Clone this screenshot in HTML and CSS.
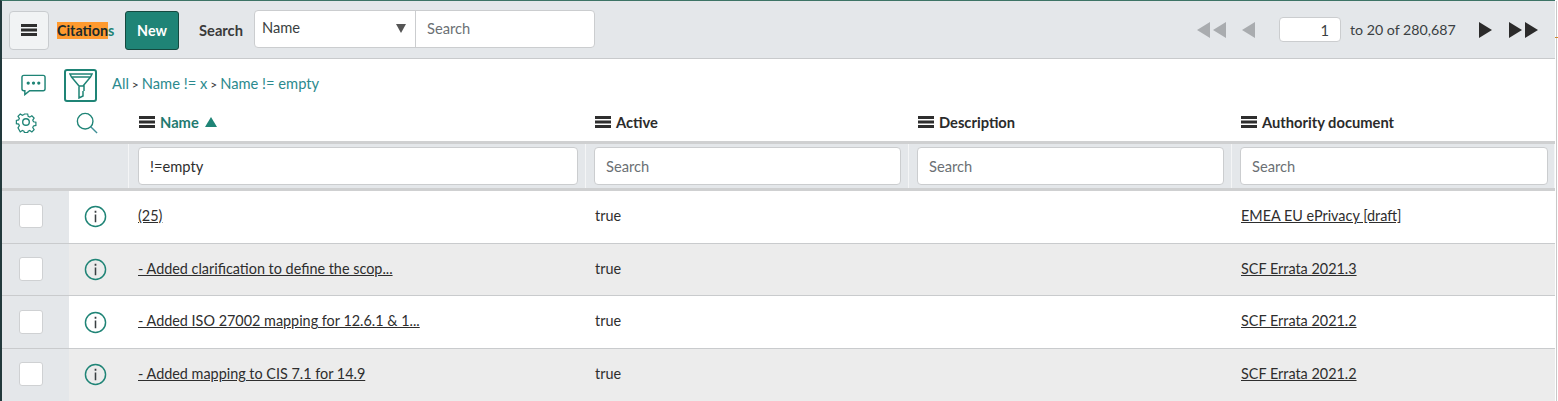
FILE: index.html
```html
<!DOCTYPE html>
<html lang="en">
<head>
  <meta charset="UTF-8">
  <title>Citations</title>
  <link rel="stylesheet" href="styles.css">
</head>
<body>
  <svg class="defs" width="0" height="0">
    <symbol id="lines" viewBox="0 0 16 12"><path d="M0 0h16v3H0zM0 4.5h16v3H0zM0 9h16v3H0z"/></symbol>
    <symbol id="info" viewBox="0 0 24 24"><circle cx="12" cy="12" r="10.5" fill="none" stroke="currentColor" stroke-width="1.5"/><path d="M11.2 10h1.600v8h-1.600zM11.100 6h1.800v2h-1.800z" fill="#3a3f42"/></symbol>
  </svg>
  <div class="page">
    <header class="topbar">
      <button class="menu-btn"><svg class="lines-lg"><use href="#lines"/></svg></button>
      <h1 class="title"><mark>Citation</mark>s</h1>
      <button class="new-btn">New</button>
      <span class="search-label">Search</span>
      <div class="search-group">
        <div class="search-select">Name<i class="select-arrow"></i></div>
        <div class="search-input">Search</div>
      </div>
      <div class="pager">
        <span class="tri tri-left"></span><span class="tri tri-left tight"></span>
        <span class="tri tri-left single"></span>
        <div class="page-input">1</div>
        <span class="page-text">to 20 of 280,687</span>
        <span class="tri tri-right"></span>
        <span class="tri tri-right double"></span><span class="tri tri-right tight"></span>
      </div>
    </header>

    <div class="filter-bar">
      <svg class="chat-icon" viewBox="0 0 26 22" width="25" height="22" fill="none" stroke="#1f8476" stroke-width="1.5">
        <path d="M3 1h20a2 2 0 0 1 2 2v12a2 2 0 0 1-2 2H9l-5 4v-4H3a2 2 0 0 1-2-2V3a2 2 0 0 1 2-2z"/>
        <circle cx="7.500" cy="9" r="1.700" fill="#1f8476" stroke="none"/><circle cx="13" cy="9" r="1.700" fill="#1f8476" stroke="none"/><circle cx="18.500" cy="9" r="1.700" fill="#1f8476" stroke="none"/>
      </svg>
      <div class="funnel-btn">
        <svg viewBox="0 0 24 26" width="24" height="26" fill="none" stroke="#1f8476" stroke-width="1.5">
          <path d="M1 1h22l-1.500 3H2.500zM2.500 4l7.500 9h4l7.500-9M10 13h5v5M10 13v12l4-2v-5"/>
        </svg>
      </div>
      <div class="crumbs">
        <a>All</a><b>&gt;</b><a>Name != x</a><b>&gt;</b><a>Name != empty</a>
      </div>
    </div>

    <div class="list">
      <div class="row head-row">
        <div class="cell check-col">
          <svg viewBox="0 0 24 24" width="22" height="22" fill="none" stroke="#1f8476" stroke-width="1.500">
            <path d="M10 2h4l.6 3 2 .9 2.600-1.700 2.800 2.800-1.700 2.600.9 2 3 .6v4l-3 .6-.9 2 1.700 2.600-2.800 2.800-2.600-1.700-2 .9-.6 1.600h-4l-.6-1.600-2-.9-2.600 1.700L2 19.200l1.700-2.600-.9-2-2.800-.6v-4l2.800-.6.9-2L2 4.800 4.800 2l2.600 1.700 2-.9z" transform="translate(1.500 1.500) scale(.88)"/>
            <circle cx="12" cy="12" r="3.600"/>
          </svg>
        </div>
        <div class="cell info-col">
          <svg viewBox="0 0 24 24" width="22" height="22" fill="none" stroke="#1f8476" stroke-width="1.500">
            <circle cx="10" cy="10" r="8.500"/><path d="M16 16l7 7" stroke="#3f8f96"/>
          </svg>
        </div>
        <div class="cell col-name th th-active"><svg class="lines"><use href="#lines"/></svg>Name<i class="sort-up"></i></div>
        <div class="cell col-active th"><svg class="lines"><use href="#lines"/></svg>Active</div>
        <div class="cell col-desc th"><svg class="lines"><use href="#lines"/></svg>Description</div>
        <div class="cell col-auth th"><svg class="lines"><use href="#lines"/></svg>Authority document</div>
      </div>

      <div class="row search-row">
        <div class="cell lead-col"></div>
        <div class="cell col-name"><div class="col-search filled">!=empty</div></div>
        <div class="cell col-active"><div class="col-search">Search</div></div>
        <div class="cell col-desc"><div class="col-search">Search</div></div>
        <div class="cell col-auth"><div class="col-search">Search</div></div>
      </div>

      <div class="row data-row">
        <div class="cell check-col"><span class="checkbox"></span></div>
        <div class="cell info-col"><svg class="info"><use href="#info"/></svg></div>
        <div class="cell col-name"><a>(25)</a></div>
        <div class="cell col-active">true</div>
        <div class="cell col-desc"></div>
        <div class="cell col-auth"><a>EMEA EU ePrivacy [draft]</a></div>
      </div>
      <div class="row data-row odd">
        <div class="cell check-col"><span class="checkbox"></span></div>
        <div class="cell info-col"><svg class="info"><use href="#info"/></svg></div>
        <div class="cell col-name"><a>- Added clarification to define the scop...</a></div>
        <div class="cell col-active">true</div>
        <div class="cell col-desc"></div>
        <div class="cell col-auth"><a>SCF Errata 2021.3</a></div>
      </div>
      <div class="row data-row">
        <div class="cell check-col"><span class="checkbox"></span></div>
        <div class="cell info-col"><svg class="info"><use href="#info"/></svg></div>
        <div class="cell col-name"><a>- Added ISO 27002 mapping for 12.6.1 &amp; 1...</a></div>
        <div class="cell col-active">true</div>
        <div class="cell col-desc"></div>
        <div class="cell col-auth"><a>SCF Errata 2021.2</a></div>
      </div>
      <div class="row data-row odd">
        <div class="cell check-col"><span class="checkbox"></span></div>
        <div class="cell info-col"><svg class="info"><use href="#info"/></svg></div>
        <div class="cell col-name"><a>- Added mapping to CIS 7.1 for 14.9</a></div>
        <div class="cell col-active">true</div>
        <div class="cell col-desc"></div>
        <div class="cell col-auth"><a>SCF Errata 2021.2</a></div>
      </div>
    </div>
  </div>
  <div class="edge-line"><i class="edge-tick"></i></div>
</body>
</html>
```

FILE: styles.css
```css
* {
  box-sizing: border-box;
}
html, body {
  height: 100%;
}
body {
  margin: 0;
  background: #fff;
  color: #2e2e2e;
  font-family: "Lato", "Liberation Sans", sans-serif;
  font-size: 14.7px;
  overflow: hidden;
  position: relative;
}
.defs {
  display: block;
  height: 0;
}
.page {
  width: 1555px;
  height: 401px;
  border-top: 1px solid #3d7466;
  border-left: 2px solid #22393c;
}
.edge-line {
  position: absolute;
  left: 1556px;
  top: 1px;
  bottom: 0;
  width: 1px;
  background: #c8c8c8;
}
.edge-tick {
  position: absolute;
  left: -1px;
  top: 36px;
  width: 3px;
  height: 1px;
  background: #d08a2e;
}

/* top bar */
.topbar {
  height: 58px;
  background: #e4e7ea;
  border-bottom: 1px solid #c8cacc;
  display: flex;
  align-items: center;
  padding-left: 7px;
}
.menu-btn {
  width: 40px;
  height: 39px;
  margin-top: 1px;
  background: #f1f3f4;
  border: 1px solid #c9cccf;
  border-radius: 4px;
  padding: 0;
  display: flex;
  align-items: center;
  justify-content: center;
}
.lines-lg {
  width: 16px;
  height: 12px;
  fill: #2e2e2e;
}
.title {
  margin: 1px 0 0 8px;
  font-size: 14.3px;
  font-weight: 700;
  color: #1f8476;
  width: 68px;
}
.title mark {
  background: #ff9a2e;
  color: #1b2a2a;
}
.new-btn {
  width: 54px;
  height: 39px;
  margin-top: 1px;
  background: #1f8476;
  color: #fff;
  border: 1px solid #15493f;
  border-radius: 3px;
  font: 700 14.3px "Lato", sans-serif;
  padding: 0;
}
.search-label {
  margin-left: 20px;
  font-weight: 700;
  color: #3a3a3a;
  margin-top: 1px;
  width: 45px;
}
.search-group {
  margin-left: 10px;
  width: 341px;
  height: 38px;
  background: #fff;
  border: 1px solid #cbcdcf;
  border-radius: 4px;
  display: flex;
  margin-bottom: 1px;
}
.search-select {
  width: 161px;
  border-right: 1px solid #cbcdcf;
  padding: 7px 7px;
  color: #3a3f42;
  position: relative;
}
.select-arrow {
  position: absolute;
  right: 9px;
  top: 13px;
  border-left: 5px solid transparent;
  border-right: 5px solid transparent;
  border-top: 9px solid #555;
}
.search-input {
  padding: 8px 11px;
  color: #6b7074;
}
.pager {
  margin-left: auto;
  display: flex;
  align-items: center;
  padding-right: 17px;
}
.tri {
  width: 0;
  height: 0;
  border-top: 8px solid transparent;
  border-bottom: 8px solid transparent;
}
.tri-left {
  border-right: 13px solid #a9acaf;
}
.tri-right {
  border-left: 13px solid #2b2b2b;
}
.tight {
  margin-left: 3px;
}
.single {
  margin-left: 16px;
}
.page-input {
  width: 62px;
  height: 25px;
  margin-left: 24px;
  background: #fff;
  border: 1px solid #cbcdcf;
  border-radius: 4px;
  text-align: right;
  padding: 3px 11px;
  color: #3a3f42;
}
.page-text {
  margin-left: 9px;
  width: 129px;
  color: #3a3f42;
  font-size: 14.2px;
}
.double {
  margin-left: 17px;
}

/* breadcrumb row */
.filter-bar {
  height: 47px;
  display: flex;
  align-items: center;
  padding-left: 19px;
}
.chat-icon {
  margin-top: 5px;
  margin-right: 1px;
}
.funnel-btn {
  width: 33px;
  height: 33px;
  margin-left: 17px;
  margin-top: 6px;
  border: 2px solid #1f8476;
  border-radius: 3px;
  display: flex;
  align-items: center;
  justify-content: center;
}
.crumbs {
  margin-left: 15px;
  margin-top: 1px;
  color: #2b8a8e;
}
.crumbs b {
  font-weight: 400;
  color: #333;
  margin: 0 3px;
  font-size: 12px;
}

/* list */
.row {
  display: flex;
}
.cell {
  display: flex;
  align-items: center;
}
.check-col {
  width: 67px;
  justify-content: center;
}
.info-col {
  width: 60px;
  padding-left: 15px;
}
.col-name {
  width: 457px;
  padding-left: 9px;
}
.col-active, .col-desc, .col-auth {
  width: 323px;
  padding-left: 8px;
}
.head-row {
  height: 38px;
  border-bottom: 3px solid #cfd0d1;
}
.head-row .check-col {
  padding: 0 20px 3px 0;
}
.head-row .info-col {
  padding: 0 0 1px 7px;
}
.th {
  font-weight: 700;
  color: #2b2b2b;
  padding-bottom: 4px;
  padding-left: 9px;
}
.th-active {
  color: #1f7a70;
  padding-left: 10px;
}
.lines {
  width: 16px;
  height: 12px;
  margin-right: 5px;
  fill: #2e2e2e;
  flex: none;
}
.sort-up {
  margin-left: 6px;
  border-left: 6px solid transparent;
  border-right: 6px solid transparent;
  border-bottom: 10px solid #1f8476;
}
.search-row {
  height: 47px;
  background: #e4e7ea;
  border-bottom: 3px solid #cfd0d1;
}
.search-row .cell {
  padding-right: 7px;
  border-right: 1px solid #f4f5f6;
}
.search-row .lead-col {
  width: 127px;
  padding-right: 0;
}
.search-row .col-auth {
  padding-right: 6px;
}
.col-search {
  width: 100%;
  height: 38px;
  background: #fff;
  border: 1px solid #cbcdcf;
  border-radius: 4px;
  padding: 9px 11px;
  color: #6b7074;
}
.col-search.filled {
  color: #2e2e2e;
}
.data-row {
  height: 52.7px;
  border-bottom: 1px solid #c9cbcd;
  color: #2e2e2e;
  font-size: 14.4px;
}
.data-row.odd {
  background: #ececec;
}
.data-row .check-col {
  background: #e4e7ea;
  padding: 0 9px 1px 0;
}
.data-row .col-name, .data-row .col-active, .data-row .col-auth {
  padding-bottom: 3px;
}
.data-row .col-active, .data-row .col-auth {
  padding-left: 9px;
}
.data-row a {
  text-decoration: underline;
  color: #2e2e2e;
}
.checkbox {
  width: 24px;
  height: 24px;
  background: #fff;
  border: 1px solid #cfd1d3;
  border-radius: 3px;
}
.info {
  width: 23px;
  height: 23px;
  color: #1f8476;
}
```
